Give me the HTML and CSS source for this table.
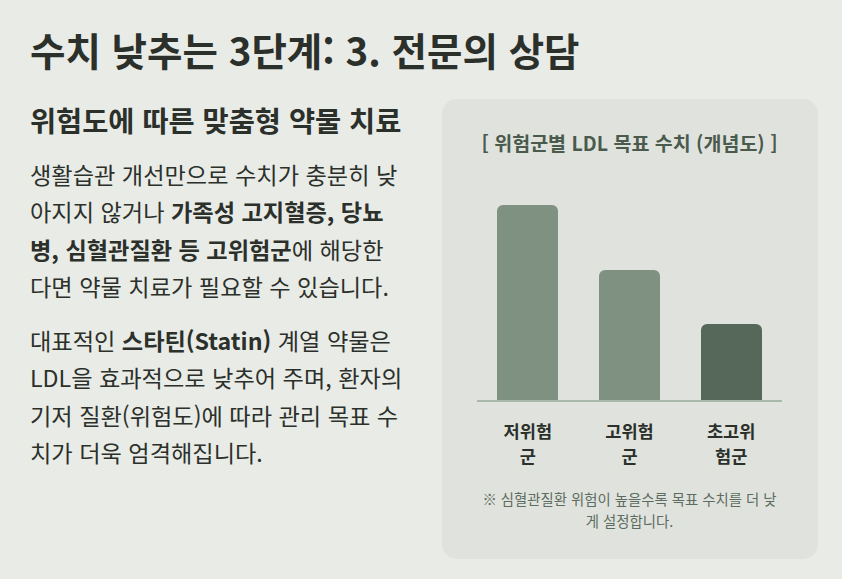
FILE: index.html
```html
<!DOCTYPE html>
<html lang="ko">
<head>
<meta charset="utf-8">
<link rel="stylesheet" href="styles.css">
</head>
<body>
<main class="page">
  <h1 class="title">수치 낮추는 3단계: 3. 전문의 상담</h1>
  <div class="cols">
    <section class="text">
      <h2 class="subtitle">위험도에 따른 맞춤형 약물 치료</h2>
      <p class="p1">생활습관 개선만으로 수치가 충분히 낮<br>아지지 않거나 <strong>가족성 고지혈증, 당뇨<br>병, 심혈관질환 등 고위험군</strong>에 해당한<br>다면 약물 치료가 필요할 수 있습니다.</p>
      <p class="p2">대표적인 <strong>스타틴(Statin)</strong> 계열 약물은<br>LDL을 효과적으로 낮추어 주며, 환자의<br>기저 질환(위험도)에 따라 관리 목표 수<br>치가 더욱 엄격해집니다.</p>
    </section>
    <aside class="panel">
      <div class="chart-title">[ 위험군별 LDL 목표 수치 (개념도) ]</div>
      <div class="chart">
        <div class="col"><div class="bar" style="height:90%"></div></div>
        <div class="col"><div class="bar" style="height:60%"></div></div>
        <div class="col"><div class="bar dark" style="height:35%"></div></div>
      </div>
      <div class="labels">
        <div class="lcol"><span class="label">저위험군</span></div>
        <div class="lcol"><span class="label">고위험군</span></div>
        <div class="lcol"><span class="label">초고위험군</span></div>
      </div>
      <p class="note">※ 심혈관질환 위험이 높을수록 목표 수치를 더 낮게 설정합니다.</p>
    </aside>
  </div>
</main>
</body>
</html>
```
FILE: styles.css
```css
html, body {
  margin: 0;
  padding: 0;
  background: #e9ebe6;
}
body {
  font-family: "Noto Sans CJK KR", "Noto Sans", sans-serif;
  color: #2b302b;
}
.page {
  padding: 26px 0 0 30px;
}
.title {
  margin: 0;
  font-size: 38.5px;
  font-weight: 700;
  line-height: 46px;
}
.cols {
  display: grid;
  grid-template-columns: 384px 376px;
  column-gap: 28px;
  margin-top: 27px;
  align-items: start;
}
.subtitle {
  margin: 1px 0 0;
  font-size: 28.4px;
  font-weight: 700;
  line-height: 40px;
}
.text p {
  margin: 0;
  font-size: 23.2px;
  line-height: 37.3px;
}
.text .p1 {
  margin-top: 16px;
}
.text .p2 {
  margin-top: 17px;
}
.text strong {
  font-weight: 700;
}
.panel {
  background: #e0e3dd;
  border-radius: 15px;
  padding: 30px 36px 27px 35px;
}
.chart-title {
  text-align: center;
  font-size: 19.5px;
  font-weight: 700;
  color: #4a5a4d;
  line-height: 28px;
}
.chart {
  display: flex;
  height: 217px;
  margin-top: 26px;
  border-bottom: 2px solid #a9b9ab;
}
.col {
  flex: 1;
  display: flex;
  align-items: flex-end;
  justify-content: center;
}
.bar {
  width: 61px;
  background: #7f9282;
  border-radius: 6px 6px 0 0;
}
.bar.dark {
  background: #56685a;
}
.labels {
  display: flex;
  margin-top: 16px;
}
.lcol {
  flex: 1;
  display: flex;
  justify-content: center;
}
.label {
  width: 61px;
  text-align: center;
  font-size: 17.6px;
  font-weight: 700;
  line-height: 25px;
  color: #2b302b;
}
.note {
  margin: 20px 0 0;
  text-align: center;
  font-size: 14.4px;
  line-height: 22px;
  color: #5d6c60;
}
```
